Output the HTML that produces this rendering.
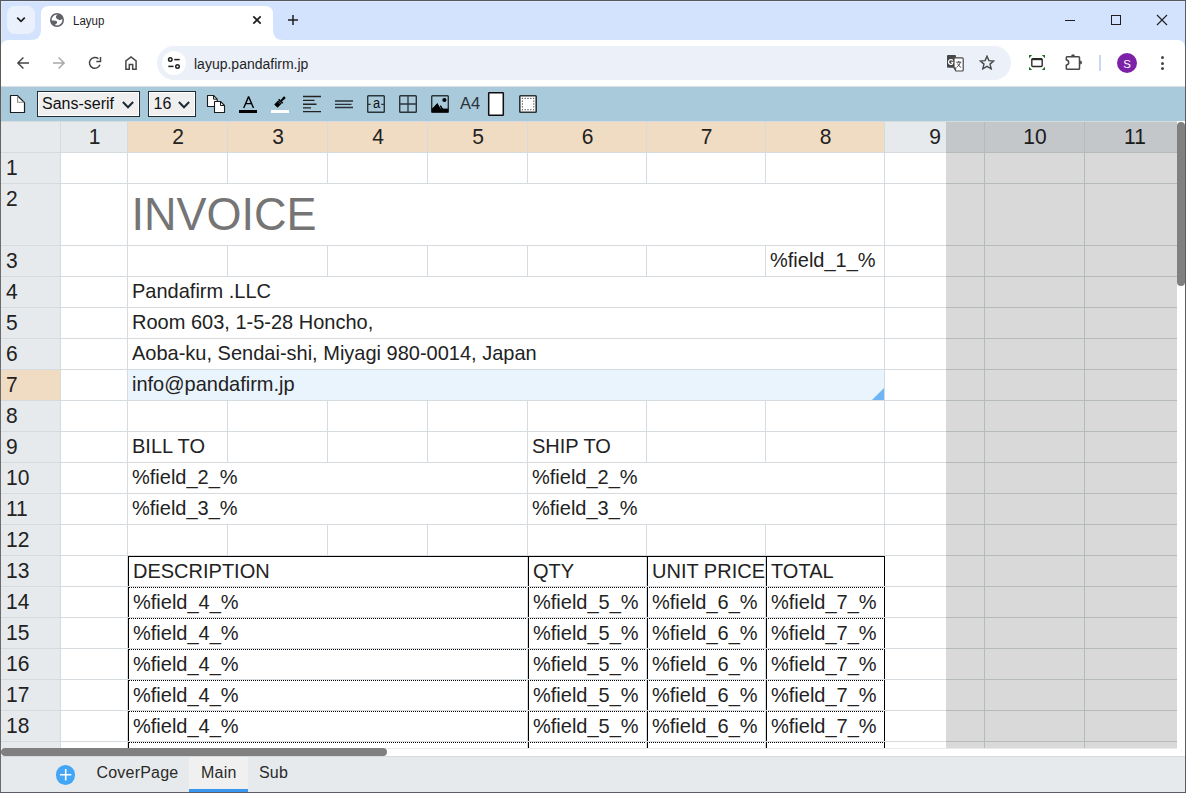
<!DOCTYPE html>
<html><head><meta charset="utf-8">
<style>
*{box-sizing:border-box;margin:0;padding:0}
html,body{width:1186px;height:793px;overflow:hidden;background:#fff;font-family:"Liberation Sans",sans-serif}
.abs{position:absolute}
.sel{background:#efefef;border:1px solid #222c33;box-shadow:inset 0 0 0 1px #fff}
.sel span{position:absolute;top:3px;font-size:16px;line-height:18px;color:#111;white-space:pre;transform:scaleY(1.04);transform-origin:0 14px}
.hd{height:30px;text-align:center;font-size:21px;line-height:30px;color:#222;white-space:pre;transform:scaleY(1.04);transform-origin:0 22px}
.rh{left:0;width:60px;padding-left:6px;font-size:21px;line-height:31px;color:#222;white-space:pre;transform:scaleY(1.04);transform-origin:0 23px}
.ct{font-size:20px;line-height:31px;color:#222;white-space:pre;transform:scaleY(1.04);transform-origin:0 22px}
.tb{top:763px;font-size:16px;line-height:20px;color:#2a2a2a;white-space:pre;letter-spacing:0.2px}
.bord{position:absolute}
</style></head><body>
<!-- tab strip -->
<div class="abs" style="left:0;top:0;width:1186px;height:50px;background:#d3e3fd"></div>
<div class="abs" style="left:0;top:1px;width:1186px;height:1px;background:#dde9fd"></div>
<div class="abs" style="left:1px;top:1px;width:1px;height:45px;background:#dde9fd"></div>
<div class="abs" style="left:7px;top:6px;width:28px;height:28px;border-radius:8px;background:#eaf1fd"></div>
<svg class="abs" style="left:7px;top:6px" width="28" height="28" viewBox="0 0 28 28"><path d="M10.2 11.6 L14 15.4 L17.8 11.6" fill="none" stroke="#1f1f1f" stroke-width="1.7"/></svg>
<!-- active tab -->
<svg class="abs" style="left:31px;top:6px" width="252" height="35" viewBox="0 0 252 35">
<path d="M0 34 Q10 34 10 24 L10 8 Q10 0 18 0 L234 0 Q242 0 242 8 L242 24 Q242 34 252 34 L252 35 L0 35 Z" fill="#fff"/>
</svg>
<svg class="abs" style="left:50px;top:13px" width="14" height="14" viewBox="0 0 14 14">
<circle cx="7" cy="7" r="6.2" fill="none" stroke="#5f6368" stroke-width="1.6"/>
<path d="M7.8 1.2 C6.3 2.3 5.7 3.4 5.9 4.6 C6.4 5.8 7.8 6.4 8.6 6.8 C9.2 7.2 9.8 7.2 10.2 7.1 C11 6.9 11.8 6.3 12.8 5.6 L12.5 3 L9.5 1 Z" fill="#5f6368"/>
<path d="M0.8 7.2 C3 7.4 5 7.6 6.3 8.1 C7 8.5 7.3 9.2 7 9.9 C6.6 10.6 5.5 11 5.1 11.8 L4.8 13.2 L2 11.5 L0.8 9 Z" fill="#5f6368"/>
</svg>
<div class="abs" style="left:73px;top:13px;font-size:11.5px;color:#1f1f1f;line-height:16px;transform:scaleY(1.1);transform-origin:0 12px">Layup</div>
<svg class="abs" style="left:251px;top:14px" width="12" height="12" viewBox="0 0 12 12"><path d="M2.3 2.3 L9.7 9.7 M9.7 2.3 L2.3 9.7" stroke="#1f1f1f" stroke-width="1.7"/></svg>
<svg class="abs" style="left:287px;top:14px" width="12" height="12" viewBox="0 0 12 12"><path d="M6 1 V11 M1 6 H11" stroke="#1f1f1f" stroke-width="1.5"/></svg>
<!-- window controls -->
<div class="abs" style="left:1065px;top:20px;width:10px;height:1px;background:#1f1f1f"></div>
<div class="abs" style="left:1111px;top:15px;width:10px;height:10px;border:1px solid #1f1f1f"></div>
<svg class="abs" style="left:1156px;top:14px" width="12" height="12" viewBox="0 0 12 12"><path d="M1 1 L11 11 M11 1 L1 11" stroke="#1f1f1f" stroke-width="1.1"/></svg>

<!-- toolbar -->
<div class="abs" style="left:1px;top:40px;width:1184px;height:47px;background:#fff;border-radius:7px 7px 0 0"></div>
<svg class="abs" style="left:16px;top:56px" width="14" height="14" viewBox="0 0 14 14"><path d="M13 7 H2.2 M7.4 1.5 L1.9 7 L7.4 12.5" fill="none" stroke="#474747" stroke-width="1.5"/></svg>
<svg class="abs" style="left:52px;top:56px" width="14" height="14" viewBox="0 0 14 14"><path d="M1 7 H11.8 M6.6 1.5 L12.1 7 L6.6 12.5" fill="none" stroke="#a9a9a9" stroke-width="1.5"/></svg>
<svg class="abs" style="left:88px;top:56px" width="14" height="14" viewBox="0 0 14 14"><path d="M10.37 2.76 A5.4 5.4 0 1 0 11.97 8.75" fill="none" stroke="#474747" stroke-width="1.5"/><path d="M12.5 1 V5.5 H8.3" fill="none" stroke="#474747" stroke-width="1.5"/></svg>
<svg class="abs" style="left:124px;top:55px" width="14" height="15" viewBox="0 0 14 15"><path d="M1.9 14.3 V5.9 L7 2 L12.1 5.9 V14.3 H8.7 V9.4 H5.3 V14.3 Z" fill="none" stroke="#474747" stroke-width="1.5" stroke-linejoin="miter"/></svg>
<!-- omnibox -->
<div class="abs" style="left:157px;top:46px;width:854px;height:34px;border-radius:17px;background:#ebf0f9"></div>
<div class="abs" style="left:162px;top:51px;width:24px;height:24px;border-radius:12px;background:#fff"></div>
<svg class="abs" style="left:166px;top:55px" width="16" height="16" viewBox="0 0 16 16">
<circle cx="4.3" cy="4.6" r="1.75" fill="none" stroke="#1f1f1f" stroke-width="1.5"/><path d="M8.2 4.6 H13.7" stroke="#1f1f1f" stroke-width="1.5"/>
<circle cx="11.5" cy="11.4" r="1.75" fill="none" stroke="#1f1f1f" stroke-width="1.5"/><path d="M2.3 11.4 H7.5" stroke="#1f1f1f" stroke-width="1.5"/>
</svg>
<div class="abs" style="left:194px;top:55px;font-size:14px;color:#1f1f1f;line-height:18px">layup.pandafirm.jp</div>
<!-- translate icon -->
<svg class="abs" style="left:947px;top:55px" width="17" height="17" viewBox="0 0 17 17">
<rect x="0" y="0" width="9" height="12.8" rx="1.1" fill="#474747"/>
<path d="M5.9 5.6 A2.4 2.4 0 1 0 6.3 7.4 H4.2" fill="none" stroke="#fff" stroke-width="1.2"/>
<path d="M7 2.8 H15.2 Q16.2 2.8 16.2 3.8 V15 Q16.2 16 15.2 16 H8.9 L7 12.8 Z" fill="#fff" stroke="#474747" stroke-width="1.2" stroke-linejoin="round"/>
<path d="M7 12.6 L8.9 16 L9.3 12.6 Z" fill="#474747"/>
<path d="M9.3 7.2 H14.3 M11.8 6 V7.2 M13.3 7.4 C12.6 9.6 11.3 11.2 9.7 12.3 M10.6 8.6 C11.4 10.4 12.6 11.6 14.2 12.4" fill="none" stroke="#474747" stroke-width="1"/>
</svg>
<svg class="abs" style="left:979px;top:55px" width="16" height="15" viewBox="0 0 16 15"><path d="M8 1.2 L9.9 5.6 L14.7 6 L11 9.1 L12.2 13.8 L8 11.3 L3.8 13.8 L5 9.1 L1.3 6 L6.1 5.6 Z" fill="none" stroke="#474747" stroke-width="1.4" stroke-linejoin="miter"/></svg>
<!-- screen capture -->
<svg class="abs" style="left:1028px;top:54px" width="18" height="17" viewBox="0 0 18 17">
<path d="M1 1 H4.2 L1 4.2 Z M17 1 H13.8 L17 4.2 Z M1 16 H4.2 L1 12.8 Z M17 16 H13.8 L17 12.8 Z" fill="#1e6e22"/>
<rect x="3.8" y="4.6" width="10.4" height="7.9" rx="1" fill="none" stroke="#2a2a2a" stroke-width="1.4"/>
<path d="M4 5.4 H14" stroke="#2a2a2a" stroke-width="1.6"/>
</svg>
<!-- extension -->
<svg class="abs" style="left:1064px;top:53px" width="20" height="18" viewBox="0 0 20 18">
<path d="M3 3.8 H14.7 Q15.5 3.8 15.5 4.6 V15.4 Q15.5 16.2 14.7 16.2 H3 Q2.3 16.2 2.3 15.4 V11.9 A2.4 2.4 0 0 0 2.3 7.1 V4.6 Q2.3 3.8 3 3.8 Z" fill="none" stroke="#474747" stroke-width="1.5" stroke-linejoin="round"/>
<path d="M7.1 3.2 A1.9 1.9 0 0 1 10.9 3.2 Z M16.1 7.6 A1.9 1.9 0 0 1 16.1 11.4 Z" fill="#474747"/>
</svg>
<div class="abs" style="left:1099px;top:55px;width:2px;height:16px;background:#c7d8f5"></div>
<div class="abs" style="left:1117px;top:53px;width:20px;height:20px;border-radius:10px;background:#7c22a8"></div>
<div class="abs" style="left:1117px;top:55.5px;width:20px;text-align:center;font-size:11.5px;line-height:16px;color:#fff">S</div>
<div class="abs" style="left:1161px;top:56px;width:3px;height:3px;border-radius:2px;background:#474747"></div>
<div class="abs" style="left:1161px;top:61.5px;width:3px;height:3px;border-radius:2px;background:#474747"></div>
<div class="abs" style="left:1161px;top:67px;width:3px;height:3px;border-radius:2px;background:#474747"></div>

<!-- app toolbar -->
<div class="abs" style="left:0;top:86px;width:1186px;height:1px;background:#dcdfe2"></div>
<div class="abs" style="left:0;top:87px;width:1186px;height:34px;background:#a8cadb"></div>
<svg class="abs" style="left:9px;top:94px" width="18" height="20" viewBox="0 0 18 20">
<path d="M1.5 1.5 H8.3 L15.5 8.7 V18.5 H1.5 Z" fill="#fff" stroke="#1c1c1c" stroke-width="1.2" stroke-linejoin="round"/>
<path d="M8.6 2 V8.2 H15" fill="none" stroke="#8c8c8c" stroke-width="1.1"/>
</svg>
<div class="abs sel" style="left:37px;top:91px;width:103px;height:26px"><span style="left:4px">Sans-serif</span>
<svg style="position:absolute;left:84px;top:9px" width="12" height="8" viewBox="0 0 12 8"><path d="M0.9 1 L6 6.2 L11.1 1" fill="none" stroke="#1c2a33" stroke-width="2"/></svg></div>
<div class="abs sel" style="left:148px;top:91px;width:48px;height:26px"><span style="left:4.5px">16</span>
<svg style="position:absolute;left:29px;top:9px" width="12" height="8" viewBox="0 0 12 8"><path d="M0.9 1 L6 6.2 L11.1 1" fill="none" stroke="#1c2a33" stroke-width="2"/></svg></div>
<!-- copy -->
<svg class="abs" style="left:206px;top:94px" width="21" height="20" viewBox="0 0 21 20">
<path d="M1.5 1.5 H7.5 L11.2 5.2 V12.5 H1.5 Z" fill="#fff" stroke="#1c1c1c" stroke-width="1.1" stroke-linejoin="round"/>
<path d="M7.5 1.5 V5.2 H11.2" fill="none" stroke="#1c1c1c" stroke-width="1"/>
<path d="M8.5 7.5 H14.5 L18.5 11.5 V18.5 H8.5 Z" fill="#fff" stroke="#1c1c1c" stroke-width="1.1" stroke-linejoin="round"/>
<path d="M14.5 7.5 V11.5 H18.5" fill="none" stroke="#1c1c1c" stroke-width="1"/>
</svg>
<!-- font color -->
<svg class="abs" style="left:239px;top:95px" width="18" height="18" viewBox="0 0 18 18">
<path d="M4.7 13 L9.6 1.6 L14.5 13 M6.5 8.6 H12.7" fill="none" stroke="#000" stroke-width="1.4" stroke-linejoin="bevel"/>
<rect x="0" y="15" width="18" height="3" fill="#000"/>
</svg>
<!-- brush -->
<svg class="abs" style="left:270px;top:93px" width="22" height="22" viewBox="0 0 22 22">
<g transform="translate(10.4 8.6) rotate(45)">
<rect x="-1" y="-6.4" width="2" height="5.4" rx="1" fill="#000"/>
<circle cx="0" cy="-5.1" r="1.3" fill="#000"/>
<rect x="-2.8" y="-1.2" width="5.6" height="1.5" fill="#000"/>
<rect x="-2.35" y="0.5" width="4.7" height="5.9" rx="0.3" fill="#000"/>
<path d="M-0.8 0.9 V2.6 M0.8 0.9 V2.6" stroke="#6d7f88" stroke-width="0.6"/>
</g>
<rect x="1" y="17" width="18" height="3" fill="#fff"/>
</svg>
<!-- align left -->
<svg class="abs" style="left:303px;top:95px" width="18" height="18" viewBox="0 0 18 18">
<path d="M0 1.5 H18 M0 5.4 H11.5 M0 9.2 H13.5 M0 12.9 H8 M0 16.6 H18" stroke="#222" stroke-width="1.4"/>
</svg>
<!-- justify -->
<svg class="abs" style="left:335px;top:95px" width="18" height="18" viewBox="0 0 18 18">
<path d="M0 6 H18 M0 9.3 H16.5 M0 12.5 H18" stroke="#2a3338" stroke-width="1.3"/>
</svg>
<!-- [a] -->
<svg class="abs" style="left:367px;top:95px" width="18" height="18" viewBox="0 0 18 18">
<rect x="0.7" y="0.7" width="16.6" height="16.6" rx="0.8" fill="none" stroke="#2b3338" stroke-width="1.4"/>
<path d="M0.5 9.3 H3.7 M14.3 9.3 H17.5" stroke="#2b3338" stroke-width="1.3"/>
</svg>
<div class="abs" style="left:373px;top:94.5px;font-size:14px;line-height:16px;color:#111;transform:scaleX(0.92);transform-origin:0 0">a</div>
<!-- grid -->
<svg class="abs" style="left:399px;top:95px" width="18" height="18" viewBox="0 0 18 18">
<rect x="0.7" y="0.7" width="16.6" height="16.6" rx="0.8" fill="none" stroke="#2b3338" stroke-width="1.4"/>
<path d="M9 0.7 V17.3 M0.7 9 H17.3" stroke="#2b3338" stroke-width="1.3"/>
</svg>
<!-- image -->
<svg class="abs" style="left:431px;top:95px" width="18" height="18" viewBox="0 0 18 18">
<rect x="0.7" y="0.7" width="16.6" height="16.6" rx="0.8" fill="none" stroke="#2b3338" stroke-width="1.4"/>
<circle cx="13.4" cy="5" r="2.1" fill="#000"/>
<path d="M0.7 14 L6.4 8 L9.8 14 Z M8.9 11.6 L9.8 10.1 L12.2 14 L10.4 14 Z" fill="#000"/>
<path d="M0.7 13.6 H17.3 V17.3 H0.7 Z" fill="#000"/>
</svg>
<div class="abs" style="left:460px;top:94px;font-size:16.5px;line-height:18px;color:#2b3238;transform:scaleY(1.05);transform-origin:0 14.5px">A4</div>
<svg class="abs" style="left:487px;top:91px" width="18" height="26" viewBox="0 0 18 26">
<rect x="1.7" y="1.7" width="14.6" height="22.6" rx="0.6" fill="#fff" stroke="#0d0d0d" stroke-width="1.5"/>
</svg>
<!-- margin -->
<svg class="abs" style="left:519px;top:95px" width="18" height="18" viewBox="0 0 18 18">
<rect x="0.8" y="0.8" width="16.4" height="16.4" rx="0.8" fill="#fff" stroke="#2b3338" stroke-width="1.6"/>
<rect x="2.8" y="2.8" width="1.2" height="1.2" fill="#555"/><rect x="2.8" y="14.1" width="1.2" height="1.2" fill="#555"/><rect x="5.6000000000000005" y="2.8" width="1.2" height="1.2" fill="#555"/><rect x="5.6000000000000005" y="14.1" width="1.2" height="1.2" fill="#555"/><rect x="8.4" y="2.8" width="1.2" height="1.2" fill="#555"/><rect x="8.4" y="14.1" width="1.2" height="1.2" fill="#555"/><rect x="11.200000000000001" y="2.8" width="1.2" height="1.2" fill="#555"/><rect x="11.200000000000001" y="14.1" width="1.2" height="1.2" fill="#555"/><rect x="14.0" y="2.8" width="1.2" height="1.2" fill="#555"/><rect x="14.0" y="14.1" width="1.2" height="1.2" fill="#555"/><rect x="2.8" y="5.6000000000000005" width="1.2" height="1.2" fill="#555"/><rect x="14.2" y="5.6000000000000005" width="1.2" height="1.2" fill="#555"/><rect x="2.8" y="8.4" width="1.2" height="1.2" fill="#555"/><rect x="14.2" y="8.4" width="1.2" height="1.2" fill="#555"/><rect x="2.8" y="11.200000000000001" width="1.2" height="1.2" fill="#555"/><rect x="14.2" y="11.200000000000001" width="1.2" height="1.2" fill="#555"/>
</svg>

<div class="abs" style="left:0;top:121px;width:1177px;height:627px;overflow:hidden;background:#fff">
<div class="abs" style="left:0px;top:0px;width:1186px;height:1px;background:#d5dbdf;"></div>
<div class="abs" style="left:0px;top:1px;width:60px;height:30px;background:#e6eaed;"></div>
<div class="abs" style="left:61px;top:1px;width:66px;height:30px;background:#e6eaed;"></div>
<div class="abs" style="left:128px;top:1px;width:99px;height:30px;background:#f0dcc3;"></div>
<div class="abs" style="left:228px;top:1px;width:99px;height:30px;background:#f0dcc3;"></div>
<div class="abs" style="left:328px;top:1px;width:99px;height:30px;background:#f0dcc3;"></div>
<div class="abs" style="left:428px;top:1px;width:99px;height:30px;background:#f0dcc3;"></div>
<div class="abs" style="left:528px;top:1px;width:118px;height:30px;background:#f0dcc3;"></div>
<div class="abs" style="left:647px;top:1px;width:118px;height:30px;background:#f0dcc3;"></div>
<div class="abs" style="left:766px;top:1px;width:118px;height:30px;background:#f0dcc3;"></div>
<div class="abs" style="left:885px;top:1px;width:99px;height:30px;background:#e6eaed;"></div>
<div class="abs" style="left:985px;top:1px;width:99px;height:30px;background:#e6eaed;"></div>
<div class="abs" style="left:1085px;top:1px;width:99px;height:30px;background:#e6eaed;"></div>
<div class="abs" style="left:0px;top:32px;width:60px;height:30px;background:#e6eaed;"></div>
<div class="abs" style="left:0px;top:63px;width:60px;height:61px;background:#e6eaed;"></div>
<div class="abs" style="left:0px;top:125px;width:60px;height:30px;background:#e6eaed;"></div>
<div class="abs" style="left:0px;top:156px;width:60px;height:30px;background:#e6eaed;"></div>
<div class="abs" style="left:0px;top:187px;width:60px;height:30px;background:#e6eaed;"></div>
<div class="abs" style="left:0px;top:218px;width:60px;height:30px;background:#e6eaed;"></div>
<div class="abs" style="left:0px;top:249px;width:60px;height:30px;background:#f0dcc3;"></div>
<div class="abs" style="left:0px;top:280px;width:60px;height:30px;background:#e6eaed;"></div>
<div class="abs" style="left:0px;top:311px;width:60px;height:30px;background:#e6eaed;"></div>
<div class="abs" style="left:0px;top:342px;width:60px;height:30px;background:#e6eaed;"></div>
<div class="abs" style="left:0px;top:373px;width:60px;height:30px;background:#e6eaed;"></div>
<div class="abs" style="left:0px;top:404px;width:60px;height:30px;background:#e6eaed;"></div>
<div class="abs" style="left:0px;top:435px;width:60px;height:30px;background:#e6eaed;"></div>
<div class="abs" style="left:0px;top:466px;width:60px;height:30px;background:#e6eaed;"></div>
<div class="abs" style="left:0px;top:497px;width:60px;height:30px;background:#e6eaed;"></div>
<div class="abs" style="left:0px;top:528px;width:60px;height:30px;background:#e6eaed;"></div>
<div class="abs" style="left:0px;top:559px;width:60px;height:30px;background:#e6eaed;"></div>
<div class="abs" style="left:0px;top:590px;width:60px;height:30px;background:#e6eaed;"></div>
<div class="abs" style="left:0px;top:621px;width:60px;height:30px;background:#e6eaed;"></div>
<div class="abs" style="left:0px;top:31px;width:1186px;height:1px;background:#d5dbdf;"></div>
<div class="abs" style="left:0px;top:62px;width:1186px;height:1px;background:#d5dbdf;"></div>
<div class="abs" style="left:0px;top:124px;width:1186px;height:1px;background:#d5dbdf;"></div>
<div class="abs" style="left:0px;top:155px;width:1186px;height:1px;background:#d5dbdf;"></div>
<div class="abs" style="left:0px;top:186px;width:1186px;height:1px;background:#d5dbdf;"></div>
<div class="abs" style="left:0px;top:217px;width:1186px;height:1px;background:#d5dbdf;"></div>
<div class="abs" style="left:0px;top:248px;width:1186px;height:1px;background:#d5dbdf;"></div>
<div class="abs" style="left:0px;top:279px;width:1186px;height:1px;background:#d5dbdf;"></div>
<div class="abs" style="left:0px;top:310px;width:1186px;height:1px;background:#d5dbdf;"></div>
<div class="abs" style="left:0px;top:341px;width:1186px;height:1px;background:#d5dbdf;"></div>
<div class="abs" style="left:0px;top:372px;width:1186px;height:1px;background:#d5dbdf;"></div>
<div class="abs" style="left:0px;top:403px;width:1186px;height:1px;background:#d5dbdf;"></div>
<div class="abs" style="left:0px;top:434px;width:1186px;height:1px;background:#d5dbdf;"></div>
<div class="abs" style="left:0px;top:465px;width:1186px;height:1px;background:#d5dbdf;"></div>
<div class="abs" style="left:0px;top:496px;width:1186px;height:1px;background:#d5dbdf;"></div>
<div class="abs" style="left:0px;top:527px;width:1186px;height:1px;background:#d5dbdf;"></div>
<div class="abs" style="left:0px;top:558px;width:1186px;height:1px;background:#d5dbdf;"></div>
<div class="abs" style="left:0px;top:589px;width:1186px;height:1px;background:#d5dbdf;"></div>
<div class="abs" style="left:0px;top:620px;width:1186px;height:1px;background:#d5dbdf;"></div>
<div class="abs" style="left:0px;top:651px;width:1186px;height:1px;background:#d5dbdf;"></div>
<div class="abs" style="left:60px;top:1px;width:1px;height:700px;background:#d5dbdf;"></div>
<div class="abs" style="left:127px;top:1px;width:1px;height:700px;background:#d5dbdf;"></div>
<div class="abs" style="left:227px;top:1px;width:1px;height:700px;background:#d5dbdf;"></div>
<div class="abs" style="left:327px;top:1px;width:1px;height:700px;background:#d5dbdf;"></div>
<div class="abs" style="left:427px;top:1px;width:1px;height:700px;background:#d5dbdf;"></div>
<div class="abs" style="left:527px;top:1px;width:1px;height:700px;background:#d5dbdf;"></div>
<div class="abs" style="left:646px;top:1px;width:1px;height:700px;background:#d5dbdf;"></div>
<div class="abs" style="left:765px;top:1px;width:1px;height:700px;background:#d5dbdf;"></div>
<div class="abs" style="left:884px;top:1px;width:1px;height:700px;background:#d5dbdf;"></div>
<div class="abs" style="left:984px;top:1px;width:1px;height:700px;background:#d5dbdf;"></div>
<div class="abs" style="left:1084px;top:1px;width:1px;height:700px;background:#d5dbdf;"></div>
<div class="abs" style="left:1184px;top:1px;width:1px;height:700px;background:#d5dbdf;"></div>
<div class="abs" style="left:128px;top:63px;width:756px;height:61px;background:#fff;"></div>
<div class="abs" style="left:128px;top:156px;width:756px;height:30px;background:#fff;"></div>
<div class="abs" style="left:128px;top:187px;width:756px;height:30px;background:#fff;"></div>
<div class="abs" style="left:128px;top:218px;width:756px;height:30px;background:#fff;"></div>
<div class="abs" style="left:128px;top:249px;width:756px;height:30px;background:#eaf4fd;"></div>
<div class="abs" style="left:128px;top:342px;width:399px;height:30px;background:#fff;"></div>
<div class="abs" style="left:528px;top:342px;width:356px;height:30px;background:#fff;"></div>
<div class="abs" style="left:128px;top:373px;width:399px;height:30px;background:#fff;"></div>
<div class="abs" style="left:528px;top:373px;width:356px;height:30px;background:#fff;"></div>
<div class="abs" style="left:128px;top:435px;width:399px;height:30px;background:#fff;"></div>
<div class="abs" style="left:128px;top:466px;width:399px;height:30px;background:#fff;"></div>
<div class="abs" style="left:128px;top:497px;width:399px;height:30px;background:#fff;"></div>
<div class="abs" style="left:128px;top:528px;width:399px;height:30px;background:#fff;"></div>
<div class="abs" style="left:128px;top:559px;width:399px;height:30px;background:#fff;"></div>
<div class="abs" style="left:128px;top:590px;width:399px;height:30px;background:#fff;"></div>
<div class="abs" style="left:128px;top:621px;width:399px;height:30px;background:#fff;"></div>
<div class="abs hd" style="left:61px;top:1px;width:67px">1</div>
<div class="abs hd" style="left:128px;top:1px;width:100px">2</div>
<div class="abs hd" style="left:228px;top:1px;width:100px">3</div>
<div class="abs hd" style="left:328px;top:1px;width:100px">4</div>
<div class="abs hd" style="left:428px;top:1px;width:100px">5</div>
<div class="abs hd" style="left:528px;top:1px;width:119px">6</div>
<div class="abs hd" style="left:647px;top:1px;width:119px">7</div>
<div class="abs hd" style="left:766px;top:1px;width:119px">8</div>
<div class="abs hd" style="left:885px;top:1px;width:100px">9</div>
<div class="abs hd" style="left:985px;top:1px;width:100px">10</div>
<div class="abs hd" style="left:1085px;top:1px;width:100px">11</div>
<div class="abs rh" style="left:0;top:31px">1</div>
<div class="abs rh" style="left:0;top:62px">2</div>
<div class="abs rh" style="left:0;top:124px">3</div>
<div class="abs rh" style="left:0;top:155px">4</div>
<div class="abs rh" style="left:0;top:186px">5</div>
<div class="abs rh" style="left:0;top:217px">6</div>
<div class="abs rh" style="left:0;top:248px">7</div>
<div class="abs rh" style="left:0;top:279px">8</div>
<div class="abs rh" style="left:0;top:310px">9</div>
<div class="abs rh" style="left:0;top:341px">10</div>
<div class="abs rh" style="left:0;top:372px">11</div>
<div class="abs rh" style="left:0;top:403px">12</div>
<div class="abs rh" style="left:0;top:434px">13</div>
<div class="abs rh" style="left:0;top:465px">14</div>
<div class="abs rh" style="left:0;top:496px">15</div>
<div class="abs rh" style="left:0;top:527px">16</div>
<div class="abs rh" style="left:0;top:558px">17</div>
<div class="abs rh" style="left:0;top:589px">18</div>
<div class="abs rh" style="left:0;top:620px">19</div>
<div class="abs" style="left:131.5px;top:63px;font-size:45px;line-height:62px;color:#757575;white-space:pre;transform:scaleY(1.04);transform-origin:0 46px">INVOICE</div>
<div class="abs ct" style="left:770px;top:124px;">%field_1_%</div>
<div class="abs ct" style="left:132px;top:155px;">Pandafirm .LLC</div>
<div class="abs ct" style="left:132px;top:186px;">Room 603, 1-5-28 Honcho,</div>
<div class="abs ct" style="left:132px;top:217px;">Aoba-ku, Sendai-shi, Miyagi 980-0014, Japan</div>
<div class="abs ct" style="left:132px;top:248px;">info@pandafirm.jp</div>
<div class="abs ct" style="left:132px;top:310px;">BILL TO</div>
<div class="abs ct" style="left:532px;top:310px;">SHIP TO</div>
<div class="abs ct" style="left:132px;top:341px;">%field_2_%</div>
<div class="abs ct" style="left:532px;top:341px;">%field_2_%</div>
<div class="abs ct" style="left:132px;top:372px;">%field_3_%</div>
<div class="abs ct" style="left:532px;top:372px;">%field_3_%</div>
<svg class="abs" style="left:872px;top:267px" width="12" height="12" viewBox="0 0 12 12"><path d="M12 0 V12 H0 Z" fill="#6db5f5"/></svg>
<div class="abs" style="left:128px;top:435px;width:757px;height:1px;background:#000;"></div>
<div class="abs" style="left:129px;top:466px;width:397px;height:1px;background:repeating-linear-gradient(90deg,#000 0,#000 1px,transparent 1px,transparent 2px)"></div>
<div class="abs" style="left:530px;top:466px;width:115px;height:1px;background:repeating-linear-gradient(90deg,#000 0,#000 1px,transparent 1px,transparent 2px)"></div>
<div class="abs" style="left:649px;top:466px;width:115px;height:1px;background:repeating-linear-gradient(90deg,#000 0,#000 1px,transparent 1px,transparent 2px)"></div>
<div class="abs" style="left:768px;top:466px;width:115px;height:1px;background:repeating-linear-gradient(90deg,#000 0,#000 1px,transparent 1px,transparent 2px)"></div>
<div class="abs" style="left:129px;top:497px;width:397px;height:1px;background:repeating-linear-gradient(90deg,#000 0,#000 1px,transparent 1px,transparent 2px)"></div>
<div class="abs" style="left:530px;top:497px;width:115px;height:1px;background:repeating-linear-gradient(90deg,#000 0,#000 1px,transparent 1px,transparent 2px)"></div>
<div class="abs" style="left:649px;top:497px;width:115px;height:1px;background:repeating-linear-gradient(90deg,#000 0,#000 1px,transparent 1px,transparent 2px)"></div>
<div class="abs" style="left:768px;top:497px;width:115px;height:1px;background:repeating-linear-gradient(90deg,#000 0,#000 1px,transparent 1px,transparent 2px)"></div>
<div class="abs" style="left:129px;top:528px;width:397px;height:1px;background:repeating-linear-gradient(90deg,#000 0,#000 1px,transparent 1px,transparent 2px)"></div>
<div class="abs" style="left:530px;top:528px;width:115px;height:1px;background:repeating-linear-gradient(90deg,#000 0,#000 1px,transparent 1px,transparent 2px)"></div>
<div class="abs" style="left:649px;top:528px;width:115px;height:1px;background:repeating-linear-gradient(90deg,#000 0,#000 1px,transparent 1px,transparent 2px)"></div>
<div class="abs" style="left:768px;top:528px;width:115px;height:1px;background:repeating-linear-gradient(90deg,#000 0,#000 1px,transparent 1px,transparent 2px)"></div>
<div class="abs" style="left:129px;top:559px;width:397px;height:1px;background:repeating-linear-gradient(90deg,#000 0,#000 1px,transparent 1px,transparent 2px)"></div>
<div class="abs" style="left:530px;top:559px;width:115px;height:1px;background:repeating-linear-gradient(90deg,#000 0,#000 1px,transparent 1px,transparent 2px)"></div>
<div class="abs" style="left:649px;top:559px;width:115px;height:1px;background:repeating-linear-gradient(90deg,#000 0,#000 1px,transparent 1px,transparent 2px)"></div>
<div class="abs" style="left:768px;top:559px;width:115px;height:1px;background:repeating-linear-gradient(90deg,#000 0,#000 1px,transparent 1px,transparent 2px)"></div>
<div class="abs" style="left:129px;top:590px;width:397px;height:1px;background:repeating-linear-gradient(90deg,#000 0,#000 1px,transparent 1px,transparent 2px)"></div>
<div class="abs" style="left:530px;top:590px;width:115px;height:1px;background:repeating-linear-gradient(90deg,#000 0,#000 1px,transparent 1px,transparent 2px)"></div>
<div class="abs" style="left:649px;top:590px;width:115px;height:1px;background:repeating-linear-gradient(90deg,#000 0,#000 1px,transparent 1px,transparent 2px)"></div>
<div class="abs" style="left:768px;top:590px;width:115px;height:1px;background:repeating-linear-gradient(90deg,#000 0,#000 1px,transparent 1px,transparent 2px)"></div>
<div class="abs" style="left:129px;top:621px;width:397px;height:1px;background:repeating-linear-gradient(90deg,#000 0,#000 1px,transparent 1px,transparent 2px)"></div>
<div class="abs" style="left:530px;top:621px;width:115px;height:1px;background:repeating-linear-gradient(90deg,#000 0,#000 1px,transparent 1px,transparent 2px)"></div>
<div class="abs" style="left:649px;top:621px;width:115px;height:1px;background:repeating-linear-gradient(90deg,#000 0,#000 1px,transparent 1px,transparent 2px)"></div>
<div class="abs" style="left:768px;top:621px;width:115px;height:1px;background:repeating-linear-gradient(90deg,#000 0,#000 1px,transparent 1px,transparent 2px)"></div>
<div class="abs" style="left:128px;top:435px;width:1px;height:30px;background:#000;"></div>
<div class="abs" style="left:528px;top:435px;width:1px;height:30px;background:#000;"></div>
<div class="abs" style="left:647px;top:435px;width:1px;height:30px;background:#000;"></div>
<div class="abs" style="left:766px;top:435px;width:1px;height:30px;background:#000;"></div>
<div class="abs" style="left:884px;top:435px;width:1px;height:30px;background:#000;"></div>
<div class="abs" style="left:128px;top:466px;width:1px;height:30px;background:#000;"></div>
<div class="abs" style="left:528px;top:466px;width:1px;height:30px;background:#000;"></div>
<div class="abs" style="left:647px;top:466px;width:1px;height:30px;background:#000;"></div>
<div class="abs" style="left:766px;top:466px;width:1px;height:30px;background:#000;"></div>
<div class="abs" style="left:884px;top:466px;width:1px;height:30px;background:#000;"></div>
<div class="abs" style="left:128px;top:497px;width:1px;height:30px;background:#000;"></div>
<div class="abs" style="left:528px;top:497px;width:1px;height:30px;background:#000;"></div>
<div class="abs" style="left:647px;top:497px;width:1px;height:30px;background:#000;"></div>
<div class="abs" style="left:766px;top:497px;width:1px;height:30px;background:#000;"></div>
<div class="abs" style="left:884px;top:497px;width:1px;height:30px;background:#000;"></div>
<div class="abs" style="left:128px;top:528px;width:1px;height:30px;background:#000;"></div>
<div class="abs" style="left:528px;top:528px;width:1px;height:30px;background:#000;"></div>
<div class="abs" style="left:647px;top:528px;width:1px;height:30px;background:#000;"></div>
<div class="abs" style="left:766px;top:528px;width:1px;height:30px;background:#000;"></div>
<div class="abs" style="left:884px;top:528px;width:1px;height:30px;background:#000;"></div>
<div class="abs" style="left:128px;top:559px;width:1px;height:30px;background:#000;"></div>
<div class="abs" style="left:528px;top:559px;width:1px;height:30px;background:#000;"></div>
<div class="abs" style="left:647px;top:559px;width:1px;height:30px;background:#000;"></div>
<div class="abs" style="left:766px;top:559px;width:1px;height:30px;background:#000;"></div>
<div class="abs" style="left:884px;top:559px;width:1px;height:30px;background:#000;"></div>
<div class="abs" style="left:128px;top:590px;width:1px;height:30px;background:#000;"></div>
<div class="abs" style="left:528px;top:590px;width:1px;height:30px;background:#000;"></div>
<div class="abs" style="left:647px;top:590px;width:1px;height:30px;background:#000;"></div>
<div class="abs" style="left:766px;top:590px;width:1px;height:30px;background:#000;"></div>
<div class="abs" style="left:884px;top:590px;width:1px;height:30px;background:#000;"></div>
<div class="abs" style="left:128px;top:621px;width:1px;height:30px;background:#000;"></div>
<div class="abs" style="left:528px;top:621px;width:1px;height:30px;background:#000;"></div>
<div class="abs" style="left:647px;top:621px;width:1px;height:30px;background:#000;"></div>
<div class="abs" style="left:766px;top:621px;width:1px;height:30px;background:#000;"></div>
<div class="abs" style="left:884px;top:621px;width:1px;height:30px;background:#000;"></div>
<div class="abs ct" style="left:133px;top:435px;">DESCRIPTION</div>
<div class="abs ct" style="left:533px;top:435px;">QTY</div>
<div class="abs ct" style="left:652px;top:435px;">UNIT PRICE</div>
<div class="abs ct" style="left:771px;top:435px;">TOTAL</div>
<div class="abs ct" style="left:133px;top:466px;">%field_4_%</div>
<div class="abs ct" style="left:533px;top:466px;">%field_5_%</div>
<div class="abs ct" style="left:652px;top:466px;">%field_6_%</div>
<div class="abs ct" style="left:771px;top:466px;">%field_7_%</div>
<div class="abs ct" style="left:133px;top:497px;">%field_4_%</div>
<div class="abs ct" style="left:533px;top:497px;">%field_5_%</div>
<div class="abs ct" style="left:652px;top:497px;">%field_6_%</div>
<div class="abs ct" style="left:771px;top:497px;">%field_7_%</div>
<div class="abs ct" style="left:133px;top:528px;">%field_4_%</div>
<div class="abs ct" style="left:533px;top:528px;">%field_5_%</div>
<div class="abs ct" style="left:652px;top:528px;">%field_6_%</div>
<div class="abs ct" style="left:771px;top:528px;">%field_7_%</div>
<div class="abs ct" style="left:133px;top:559px;">%field_4_%</div>
<div class="abs ct" style="left:533px;top:559px;">%field_5_%</div>
<div class="abs ct" style="left:652px;top:559px;">%field_6_%</div>
<div class="abs ct" style="left:771px;top:559px;">%field_7_%</div>
<div class="abs ct" style="left:133px;top:590px;">%field_4_%</div>
<div class="abs ct" style="left:533px;top:590px;">%field_5_%</div>
<div class="abs ct" style="left:652px;top:590px;">%field_6_%</div>
<div class="abs ct" style="left:771px;top:590px;">%field_7_%</div>
<div class="abs" style="left:946px;top:1px;width:240px;height:700px;background:rgba(0,0,0,0.15);"></div>
</div>
<div class="abs" style="left:1177px;top:121px;width:8px;height:627px;background:#fff;"></div>
<div class="abs" style="left:1177px;top:122px;width:8px;height:164px;background:#808080;border-radius:4px"></div>
<div class="abs" style="left:1px;top:748px;width:1184px;height:8px;background:#fff;"></div>
<div class="abs" style="left:380px;top:748px;width:797px;height:1px;background:#ebebeb;"></div>
<div class="abs" style="left:1px;top:748px;width:386px;height:8px;background:#808080;border-radius:4px"></div>
<div class="abs" style="left:1px;top:756px;width:1184px;height:1px;background:#d5dbdf;"></div>
<!-- sheet tabs -->
<div class="abs" style="left:0;top:757px;width:1186px;height:36px;background:#e6eaed"></div>
<div class="abs" style="left:189px;top:757px;width:59px;height:35px;background:#f0f0f0"></div>
<div class="abs" style="left:189px;top:789px;width:59px;height:3px;background:#3a97ef"></div>
<div class="abs" style="left:55.6px;top:765.4px;width:19.4px;height:19.4px;border-radius:50%;background:#42a5f5"></div>
<svg class="abs" style="left:55.6px;top:765.4px" width="19.4" height="19.4" viewBox="0 0 19.4 19.4"><path d="M9.7 4.1 V15.5 M4.1 9.7 H15.3" stroke="#fff" stroke-width="1.6"/></svg>
<div class="abs tb" style="left:96.5px">CoverPage</div>
<div class="abs tb" style="left:201px">Main</div>
<div class="abs tb" style="left:259px">Sub</div>

<div class="bord" style="left:0;top:0;width:1186px;height:1px;background:#555860"></div>
<div class="bord" style="left:0;top:0;width:1px;height:793px;background:linear-gradient(#5f5a52 0,#5f5a52 60px,#6c6c6c 200px,#6c6c6c 100%)"></div>
<div class="bord" style="left:1185px;top:0;width:1px;height:793px;background:#5a5d63"></div>
<div class="bord" style="left:0;top:792px;width:1186px;height:1px;background:#5a5d63"></div>
</body></html>
